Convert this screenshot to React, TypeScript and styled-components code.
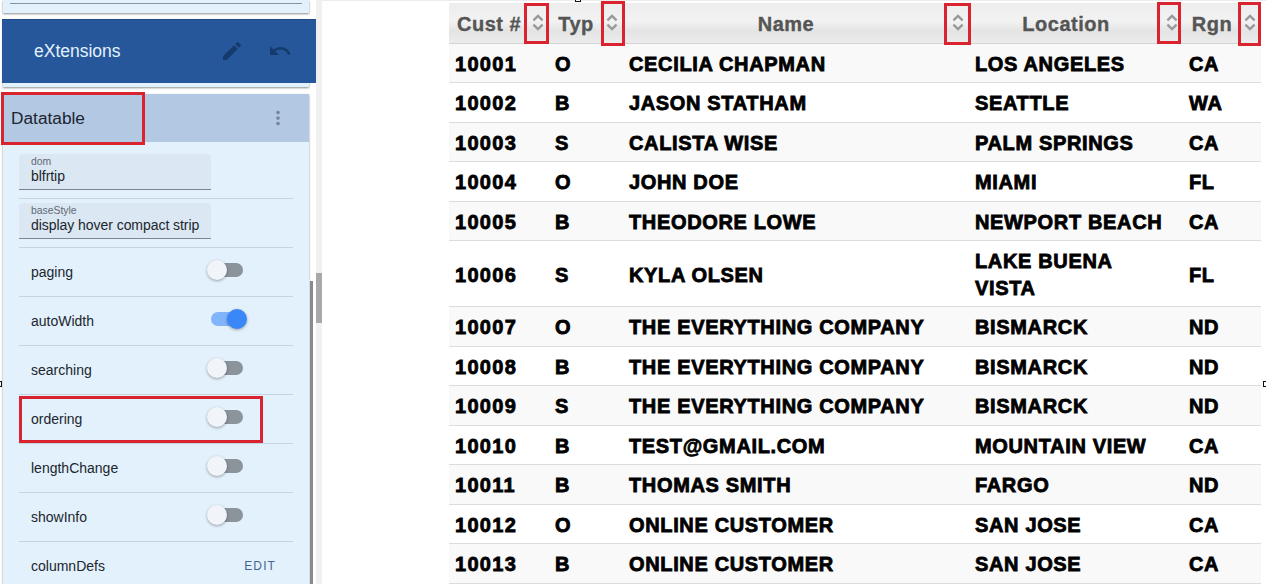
import React from "react";
import styled, { createGlobalStyle } from "styled-components";
import { MdEdit, MdUndo, MdMoreVert } from "react-icons/md";

const Global = createGlobalStyle`
  html, body { margin: 0; padding: 0; background: #fff; overflow: hidden; }
  body { font-family: "Liberation Sans", Arial, sans-serif; }
  #root { width: 1266px; height: 584px; }
`;

const Page = styled.div`
  position: relative;
  display: flex;
  width: 1266px;
  height: 584px;
  overflow: hidden;
`;

const Sidebar = styled.aside`
  display: flex;
  flex: 0 0 322px;
  height: 584px;
  overflow: hidden;
`;

const SidePane = styled.div`
  position: relative;
  flex: 0 0 316px;
  display: flex;
  flex-direction: column;
  overflow: hidden;
`;

const Track = styled.div`
  flex: 0 0 6px;
  background: #f0f0f0;
  padding-top: 273px;
`;

const Thumb = styled.div`
  height: 50px;
  background: #a9a9a9;
`;

const TopCard = styled.div`
  margin: 0 7px 0 3px;
  height: 13px;
  flex: none;
  padding: 3px 7px 0;
  box-sizing: border-box;
  background: #e3f1fd;
  box-shadow: 0 1px 2px rgba(0, 0, 0, 0.45);
`;

const TopLine = styled.div`
  height: 1px;
  background: #8a949e;
`;

const ExtCard = styled.div`
  margin: 6px 7px 0 3px;
  height: 68px;
  flex: none;
  background: #e3f1fd;
  box-shadow: 0 1px 2px rgba(0, 0, 0, 0.45);
`;

const ExtBar = styled.div`
  display: flex;
  align-items: center;
  height: 64px;
  margin: 0 -7px 0 -1px;
  padding: 0 24px 0 32px;
  background: #25579a;
  box-shadow: inset 0 1px 0 #1f4c88;
`;

const ExtTitle = styled.div`
  flex: 1;
  padding-top: 1px;
  color: #e3f1fd;
  font-size: 17.5px;
`;

const ExtIcon = styled.span`
  display: flex;
  margin-left: 24px;
  color: #163a6b;
  font-size: 24px;
`;

const Card = styled.section`
  margin: 7px 7px 0 3px;
  flex: 1;
  background: #e3f1fd;
  box-shadow: 0 1px 2px rgba(0, 0, 0, 0.45);
`;

const CardHead = styled.header`
  display: flex;
  align-items: center;
  justify-content: space-between;
  height: 48px;
  padding: 0 20px 0 8px;
  background: #b3c9e3;
  color: #1c2530;
  font-size: 17.3px;
`;

const HeadTitle = styled.span`
  padding-top: 1px;
`;

const Dots = styled.span`
  display: flex;
  color: #75869c;
  font-size: 22px;
`;

const CardBody = styled.div`
  padding: 8px 16px 0;
`;

const Row = styled.div`
  box-sizing: border-box;
  display: flex;
  align-items: center;
  justify-content: space-between;
  height: 49px;
  padding: 0 0 0 12px;
  border-bottom: 1px solid #c6d4e1;
  color: #20262c;
  font-size: 14px;
`;

const FieldRow = styled.div`
  box-sizing: border-box;
  height: 49px;
  padding-top: 4px;
  border-bottom: 1px solid #c6d4e1;
`;

const Field = styled.div`
  box-sizing: border-box;
  width: 192px;
  height: 36px;
  padding: 2px 12px 0;
  background: #dbe7f2;
  border-bottom: 1px solid #7d8690;
  border-radius: 4px 4px 0 0;
`;

const FieldLabel = styled.div`
  color: #5f6a75;
  font-size: 10.4px;
  line-height: 11px;
`;

const FieldValue = styled.div`
  color: #20262c;
  font-size: 14px;
  letter-spacing: -0.05px;
  line-height: 18px;
  white-space: nowrap;
`;

const Toggle = styled.span<{ $on?: boolean }>`
  position: relative;
  display: block;
  flex: none;
  width: 34px;
  height: 14px;
  margin-right: ${(p) => (p.$on ? "48px" : "50px")};
  margin-bottom: 4px;
  border-radius: 7px;
  background: ${(p) => (p.$on ? "#82b4fb" : "#8b939b")};
  &::after {
    content: "";
    position: absolute;
    top: -3px;
    left: ${(p) => (p.$on ? "16px" : "-2px")};
    width: 20px;
    height: 20px;
    border-radius: 50%;
    background: ${(p) => (p.$on ? "#3a87f7" : "#f1f5f9")};
    box-shadow: 0 1px 3px rgba(0, 0, 0, 0.35);
  }
`;

const EditLink = styled.span`
  margin-right: 17px;
  color: #43658f;
  font-size: 12px;
  letter-spacing: 1.1px;
  font-weight: 500;
`;

const PaneBar = styled.div`
  position: absolute;
  left: 310px;
  top: 281px;
  width: 3px;
  height: 303px;
  background: #868b90;
`;

const Main = styled.main`
  flex: 1;
  box-sizing: border-box;
  height: 584px;
  padding: 2px 5px 0 127px;
  border-top: 1px solid #ececec;
  overflow: hidden;
`;

const GridTable = styled.div`
  width: 812px;
`;

const COLS = "100px 74px 346px 214px 78px";

const HeadRow = styled.div`
  display: grid;
  grid-template-columns: ${COLS};
  box-sizing: border-box;
  height: 40.5px;
  border-bottom: 1px solid #d3d3d3;
  background: linear-gradient(#ededed 0%, #f2f2f2 45%, #e4e4e4 70%, #ececec 100%);
`;

const Th = styled.div`
  display: flex;
  align-items: center;
  min-width: 0;
  padding: 0 5px 0 8px;
  color: #555;
  font-size: 20px;
  font-weight: bold;
  -webkit-text-stroke: 0.35px #555;
  letter-spacing: 0.5px;
`;

const ThLabel = styled.span`
  flex: 1;
  min-width: 0;
  padding-top: 3px;
  text-align: center;
  white-space: nowrap;
`;

const SortSvg = styled.svg`
  flex: none;
  width: 12px;
  height: 17px;
  margin-left: 11px;
`;

const BodyRow = styled.div<{ $odd: boolean }>`
  display: grid;
  grid-template-columns: ${COLS};
  align-items: center;
  box-sizing: border-box;
  border-bottom: 1px solid #dcdcdc;
  background: ${(p) => (p.$odd ? "#f9f9f9" : "#fff")};
`;

const Td = styled.div<{ $num?: boolean }>`
  padding: 7.25px 8px 4.75px 6px;
  color: #000;
  font-size: 20px;
  font-weight: bold;
  line-height: 26.5px;
  -webkit-text-stroke: 0.8px #000;
  letter-spacing: ${(p) => (p.$num ? "1.3px" : "0.65px")};
`;

const Mark = styled.div<{ $x: number; $y: number; $w: number; $h: number }>`
  position: absolute;
  left: ${(p) => p.$x}px;
  top: ${(p) => p.$y}px;
  width: ${(p) => p.$w}px;
  height: ${(p) => p.$h}px;
  box-sizing: border-box;
  border: 3px solid #d9232e;
  pointer-events: none;
`;

const Handle = styled.div<{ $x: number; $y: number }>`
  position: absolute;
  left: ${(p) => p.$x}px;
  top: ${(p) => p.$y}px;
  width: 6px;
  height: 6px;
  box-sizing: border-box;
  border: 1px solid #111;
  background: #fff;
`;

const SortIcon = () => (
  <SortSvg viewBox="0 0 12 17">
    <path d="M1.4 6.4 6 2 10.6 6.4" fill="none" stroke="#999" strokeWidth="2.4" />
    <path d="M1.4 10.6 6 15 10.6 10.6" fill="none" stroke="#999" strokeWidth="2.4" />
  </SortSvg>
);

const columns = ["Cust #", "Typ", "Name", "Location", "Rgn"];

const rows: string[][] = [
  ["10001", "O", "CECILIA CHAPMAN", "LOS ANGELES", "CA"],
  ["10002", "B", "JASON STATHAM", "SEATTLE", "WA"],
  ["10003", "S", "CALISTA WISE", "PALM SPRINGS", "CA"],
  ["10004", "O", "JOHN DOE", "MIAMI", "FL"],
  ["10005", "B", "THEODORE LOWE", "NEWPORT BEACH", "CA"],
  ["10006", "S", "KYLA OLSEN", "LAKE BUENA VISTA", "FL"],
  ["10007", "O", "THE EVERYTHING COMPANY", "BISMARCK", "ND"],
  ["10008", "B", "THE EVERYTHING COMPANY", "BISMARCK", "ND"],
  ["10009", "S", "THE EVERYTHING COMPANY", "BISMARCK", "ND"],
  ["10010", "B", "TEST@GMAIL.COM", "MOUNTAIN VIEW", "CA"],
  ["10011", "B", "THOMAS SMITH", "FARGO", "ND"],
  ["10012", "O", "ONLINE CUSTOMER", "SAN JOSE", "CA"],
  ["10013", "B", "ONLINE CUSTOMER", "SAN JOSE", "CA"],
];

const switches: [string, boolean][] = [
  ["paging", false],
  ["autoWidth", true],
  ["searching", false],
  ["ordering", false],
  ["lengthChange", false],
  ["showInfo", false],
];

const marks = [
  { x: 1, y: 92, w: 144, h: 53 },
  { x: 19, y: 396, w: 244, h: 47 },
  { x: 524, y: 3, w: 25, h: 41 },
  { x: 601, y: 1, w: 24, h: 45 },
  { x: 944, y: 3, w: 27, h: 42 },
  { x: 1157, y: 2, w: 24, h: 42 },
  { x: 1238, y: 2, w: 23, h: 44 },
];

const handles = [
  { x: 575, y: -4 },
  { x: -4, y: 381 },
  { x: 1263, y: 381 },
];

export default function App() {
  return (
    <Page>
      <Global />
      <Sidebar>
        <SidePane>
          <TopCard>
            <TopLine />
          </TopCard>
          <ExtCard>
            <ExtBar>
              <ExtTitle>eXtensions</ExtTitle>
              <ExtIcon>
                <MdEdit />
              </ExtIcon>
              <ExtIcon>
                <MdUndo />
              </ExtIcon>
            </ExtBar>
          </ExtCard>
          <Card>
            <CardHead>
              <HeadTitle>Datatable</HeadTitle>
              <Dots>
                <MdMoreVert />
              </Dots>
            </CardHead>
            <CardBody>
              <FieldRow>
                <Field>
                  <FieldLabel>dom</FieldLabel>
                  <FieldValue>blfrtip</FieldValue>
                </Field>
              </FieldRow>
              <FieldRow>
                <Field>
                  <FieldLabel>baseStyle</FieldLabel>
                  <FieldValue>display hover compact strip</FieldValue>
                </Field>
              </FieldRow>
              {switches.map(([label, on]) => (
                <Row key={label}>
                  {label}
                  <Toggle $on={on} />
                </Row>
              ))}
              <Row>
                columnDefs
                <EditLink>EDIT</EditLink>
              </Row>
            </CardBody>
          </Card>
          <PaneBar />
        </SidePane>
        <Track>
          <Thumb />
        </Track>
      </Sidebar>
      <Main>
        <GridTable>
          <HeadRow>
            {columns.map((name) => (
              <Th key={name}>
                <ThLabel>{name}</ThLabel>
                <SortIcon />
              </Th>
            ))}
          </HeadRow>
          {rows.map((r, i) => (
            <BodyRow key={r[0]} $odd={i % 2 === 0}>
              {r.map((c, j) => (
                <Td key={j} $num={j === 0}>
                  {c}
                </Td>
              ))}
            </BodyRow>
          ))}
        </GridTable>
      </Main>
      {marks.map((m, i) => (
        <Mark key={i} $x={m.x} $y={m.y} $w={m.w} $h={m.h} />
      ))}
      {handles.map((h, i) => (
        <Handle key={i} $x={h.x} $y={h.y} />
      ))}
    </Page>
  );
}
